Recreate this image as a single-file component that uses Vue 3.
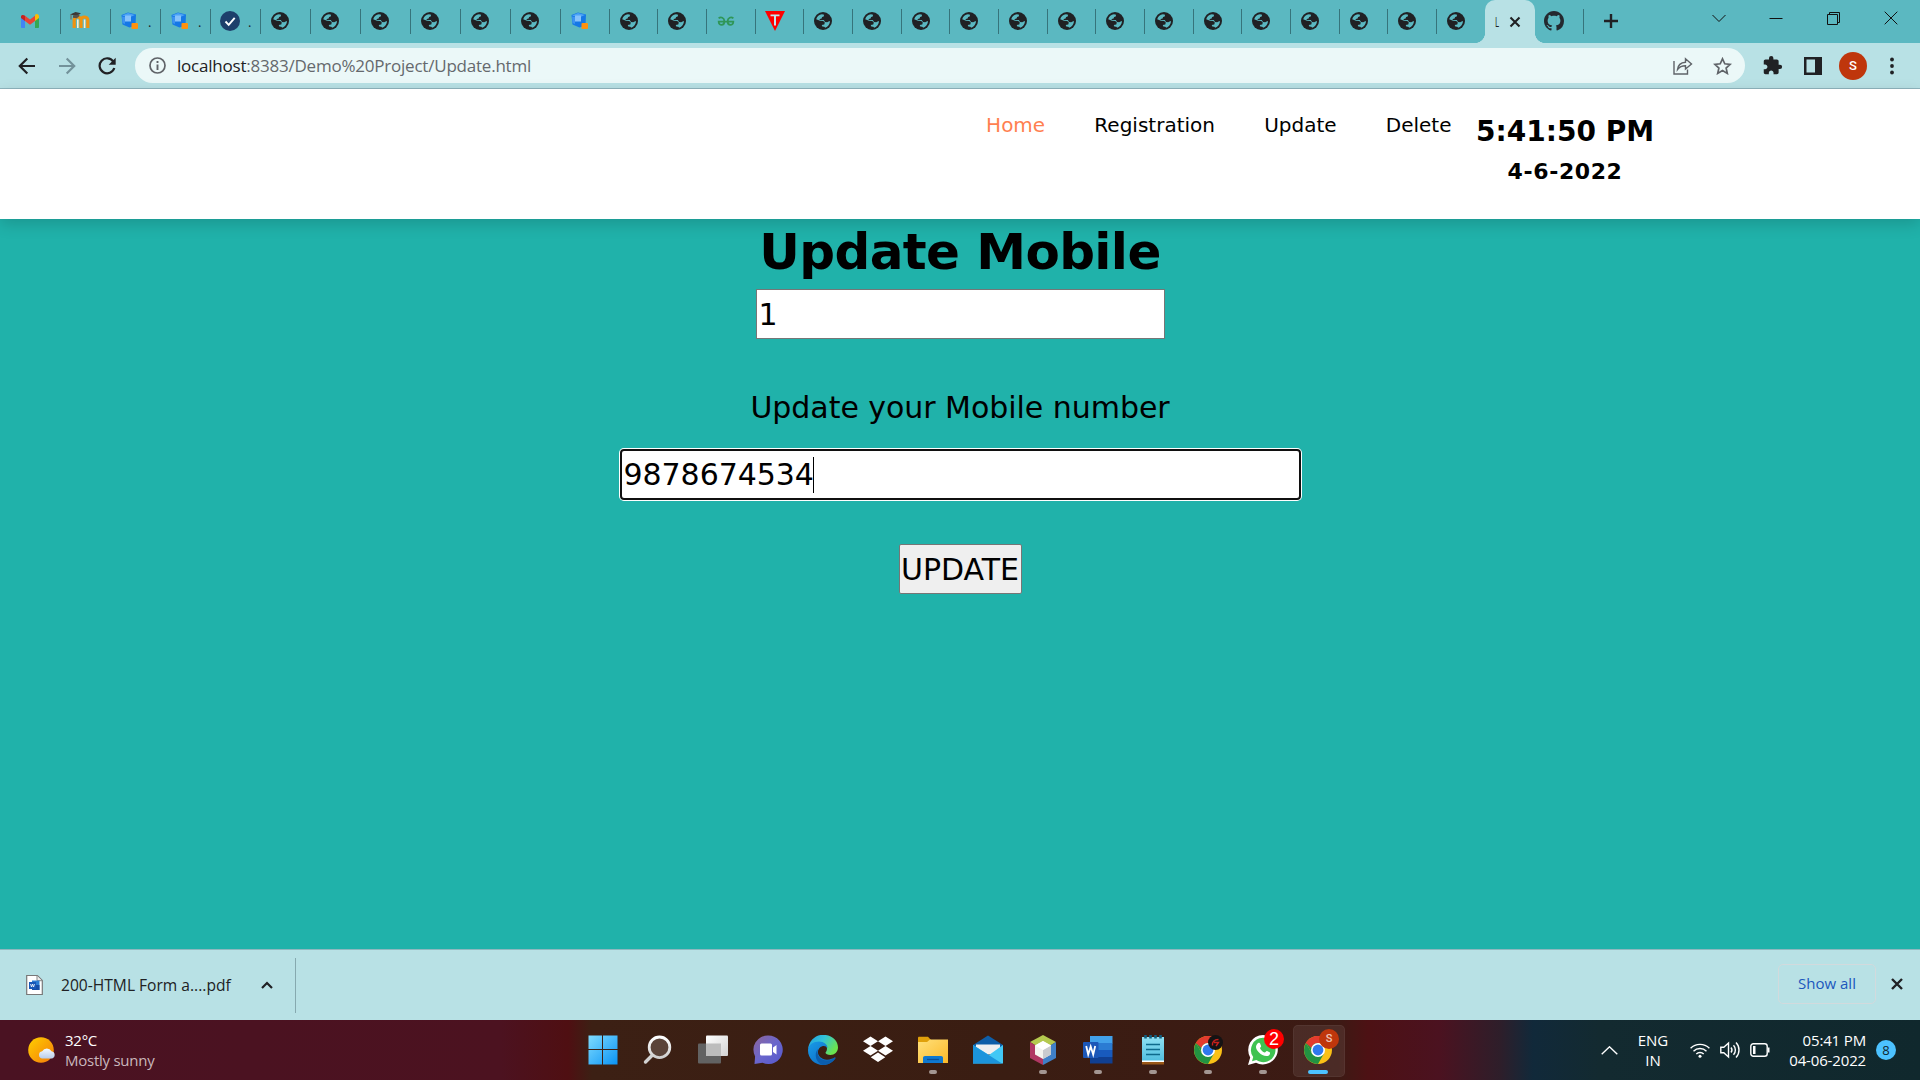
<script setup>
const wide = ['gmail', 'moodle', 'cube', 'cube', 'check', 'globe', 'globe', 'globe', 'globe', 'globe', 'globe']
const narrow = ['cube', 'globe', 'globe', 'gfg', 'tee', ...Array(14).fill('globe')]
const tabs = [
  ...wide.map((icon, i) => ({ icon, narrow: false, dot: i > 1 && i < 5 })),
  ...narrow.map((icon) => ({ icon, narrow: true, dot: false })),
]
const links = ['Home', 'Registration', 'Update', 'Delete']
const apps = [
  { icon: 'start' }, { icon: 'search' }, { icon: 'taskview' }, { icon: 'chat' }, { icon: 'edge' },
  { icon: 'dropbox' }, { icon: 'folder', open: true }, { icon: 'mail' }, { icon: 'netbeans', open: true },
  { icon: 'word', open: true }, { icon: 'notepad', open: true }, { icon: 'chrome', open: true, badge: 'dark' },
  { icon: 'whatsapp', open: true, badge: 'count' }, { icon: 'chrome', active: true, badge: 'user' },
]
</script>

<template>
  <div class="screen">
    <svg class="defs" width="0" height="0" aria-hidden="true">
      <defs>
        <linearGradient id="gStart" x1="0" y1="0" x2="1" y2="1"><stop offset="0" stop-color="#7fdcff" /><stop offset="1" stop-color="#0a93f5" /></linearGradient>
        <linearGradient id="gSearch" x1="0" y1="0" x2="0" y2="1"><stop offset="0" stop-color="#ffffff" /><stop offset="1" stop-color="#cfcfcf" /></linearGradient>
        <linearGradient id="gTask" x1="0" y1="0" x2="1" y2="1"><stop offset="0" stop-color="#ffffff" /><stop offset="1" stop-color="#d2d2d2" /></linearGradient>
        <linearGradient id="gChat" x1="0" y1="0" x2="1" y2="1"><stop offset="0" stop-color="#8e6598" /><stop offset=".5" stop-color="#6a66cc" /><stop offset="1" stop-color="#5558cc" /></linearGradient>
        <linearGradient id="gEdge" x1="0" y1="0" x2="1" y2=".5"><stop offset="0" stop-color="#1e9de4" /><stop offset=".5" stop-color="#33c3d7" /><stop offset="1" stop-color="#6be34f" /></linearGradient>
        <linearGradient id="gEdge2" x1="0" y1="0" x2="1" y2="1"><stop offset="0" stop-color="#199be8" /><stop offset="1" stop-color="#0a62bd" /></linearGradient>
        <linearGradient id="gFolder" x1="0" y1="0" x2="1" y2="1"><stop offset="0" stop-color="#ffe07a" /><stop offset="1" stop-color="#fbb929" /></linearGradient>
        <linearGradient id="gSun" x1="0" y1="0" x2="1" y2="1"><stop offset="0" stop-color="#ffd000" /><stop offset="1" stop-color="#f47a0a" /></linearGradient>
        <linearGradient id="gCloud" x1="0" y1="0" x2="0" y2="1"><stop offset="0" stop-color="#f4faff" /><stop offset="1" stop-color="#b8cdea" /></linearGradient>
        <linearGradient id="gNote" x1="0" y1="0" x2="0" y2="1"><stop offset="0" stop-color="#8fe0f2" /><stop offset="1" stop-color="#52bfdf" /></linearGradient>
      </defs>
      <symbol id="i-globe" viewBox="0 0 18 18">
        <circle cx="9" cy="9" r="9" fill="#202124" />
        <path d="M2.2 7.3C3 4.4 5.2 2.5 7.9 2.2l2.2.5-.4 1.8-1.6.5-.5 1.5-1.8.4-.2 1h4.2l1.2 2.2 2.2.2 2.4-1.2.3.2c0 3.2-2.3 5.8-5.1 6.5l.1-.7-3.100-.8-.2-1.400 2.700-.3.5-2.100-1.600-1.500-3.200-.3z" fill="#5bb8c1" />
        <path d="M2.2 8.600l3.900 2 .2 1.700 1.500.7-.2 2.600C4.500 15.100 2 12.100 2.200 8.600z" fill="#202124" />
      </symbol>
      <symbol id="i-gmail" viewBox="0 0 20 20">
        <path d="M1 5v11c0 .6.5 1 1 1h3V9z" fill="#4285f4" /><path d="M19 5v11c0 .6-.5 1-1 1h-3V9z" fill="#34a853" />
        <path d="M15 4.8V10l4-3V5.300c0-2-2.200-3-3.700-1.800z" fill="#fbbc04" /><path d="M5 4.800 10 8.500l5-3.700V10l-5 3.700L5 10z" fill="#ea4335" /><path d="M1 5.300V7l4 3V4.800l-.4-.3C3 3.300 1 4.300 1 5.300z" fill="#c5221f" />
      </symbol>
      <symbol id="i-moodle" viewBox="0 0 20 20">
        <path d="M4.200 17V7.500M4.200 17V9c0-4 6.800-4 6.800 0v8M11 9c0-4 6.800-4 6.800 0v8" fill="none" stroke="#f0930f" stroke-width="3.200" />
        <path d="M7 17V8.500h1.600V17zm6.800 0V8.500h1.600V17z" fill="#fff0d2" />
        <path d="M0 3.500 5.500 1l5.500 1.200L6.500 5z" fill="#3c3936" /><path d="M3 4.500v2.300l3.800.4 2.500-2V3.500z" fill="#57514a" /><path d="M1 3.500v5" stroke="#77624c" />
      </symbol>
      <symbol id="i-cube" viewBox="0 0 20 20">
        <path d="M1.500 4 8 1.500l8 2-.5 11-6 2-7-3z" fill="#1478e6" /><path d="M2 4.500 8 2l7 2-6 2.500z" fill="#4ba2f5" />
        <path d="M5 4.500h6v6H5z" fill="#85c2fb" /><path d="M2 5.500 5 6v7l-2.500-1z" fill="#3c93f1" /><rect x="11.500" y="12" width="6.500" height="6" rx="1" fill="#ff930f" />
      </symbol>
      <symbol id="i-check" viewBox="0 0 20 20">
        <circle cx="10" cy="10" r="10" fill="#1d3f6b" /><path d="m5.500 10.500 3.200 3.300 6-7" fill="none" stroke="#fff" stroke-width="1.900" />
      </symbol>
      <symbol id="i-gfg" viewBox="0 0 20 20">
        <path d="M2.600 7.300c2.300-1.700 5.800-.8 5.800 3.200 0 4.500-5.700 4.500-5.700.2h14.600c0 4.300-5.700 4.300-5.700-.2 0-4 3.500-4.900 5.800-3.200" fill="none" stroke="#2f9658" stroke-width="1.800" />
      </symbol>
      <symbol id="i-tee" viewBox="0 0 20 20"><path d="M0 0h20L10 20z" fill="#f00" /><path d="M5.500 3.500h9v1.800h-3.500V14.500H9V5.300H5.500z" fill="#bfe9ee" /></symbol>
      <symbol id="i-github" viewBox="0 0 16 16"><path fill="#24292f" d="M8 0C3.580 0 0 3.580 0 8c0 3.540 2.290 6.530 5.470 7.590.4.070.55-.17.55-.38 0-.19-.01-.82-.01-1.490-2.010.37-2.530-.49-2.690-.94-.09-.23-.48-.94-.82-1.130-.28-.15-.68-.52-.01-.53.63-.01 1.080.58 1.230.82.72 1.210 1.870.87 2.330.66.07-.52.28-.87.51-1.070-1.780-.2-3.640-.89-3.640-3.950 0-.87.31-1.590.82-2.150-.08-.2-.36-1.020.08-2.120 0 0 .67-.21 2.200.82.640-.18 1.320-.27 2-.27s1.360.09 2 .27c1.530-1.040 2.200-.82 2.200-.82.44 1.100.16 1.920.08 2.120.51.56.82 1.270.82 2.150 0 3.070-1.870 3.750-3.650 3.950.29.25.54.73.54 1.480 0 1.070-.01 1.930-.01 2.200 0 .21.15.46.55.38A8.010 8.010 0 0 0 16 8c0-4.420-3.580-8-8-8z" /></symbol>

      <symbol id="i-start" viewBox="0 0 30 30"><path d="M.5.500H14V14H.5zM15 .5h14.500V14H15zM.5 15H14v14.500H.5zM15 15h14.500v14.500H15z" fill="url(#gStart)" /></symbol>
      <symbol id="i-search" viewBox="0 0 30 30"><path d="M9.500 20 2.500 27" stroke="#d2d2d2" stroke-width="3.400" stroke-linecap="round" /><circle cx="16.500" cy="12.300" r="10.300" fill="#5a4339" stroke="url(#gSearch)" stroke-width="2.800" /></symbol>
      <symbol id="i-taskview" viewBox="0 0 30 30"><rect x="0" y="8.500" width="23" height="20" rx="1" fill="#626262" /><rect x="8" y=".5" width="22" height="20.500" rx="1" fill="url(#gTask)" /><rect x="8" y="8.500" width="15" height="12.500" fill="#bcbcbc" /></symbol>
      <symbol id="i-chat" viewBox="0 0 30 30"><path d="M15 .5a14.300 14.300 0 1 1-5.500 27.300L1.500 29l.6-7.500A14.300 14.300 0 0 1 15 .5z" fill="url(#gChat)" /><rect x="7" y="8.500" width="12" height="12" rx="1.500" fill="#fff" /><path d="m20 12.500 3.500-2.500v9.500L20 17z" fill="#fff" /></symbol>
      <symbol id="i-edge" viewBox="0 0 30 30">
        <path d="M.1 14C1 5.500 7.500-.2 15-.2c8.500 0 15 5.500 15 12.700 0 4.500-3.500 7.500-7.500 7.500-3 0-5-1.200-5-2.200 0-.8 1.500-1.500 1.500-4C19 10 15.500 8 11 8 6 8 1.500 10.500.1 14z" fill="url(#gEdge)" />
        <path d="M.1 14C.8 9.500 5.500 6.500 11 6.500c5 0 8.500 3 8.500 6.500-1.500-2.500-5-2.800-7.500-.5-4.500 4-1.500 12 7 12.200 3.500 0 6.500-1.500 7.500-2.200.8-.4 1.300.3.800 1C24.500 27.500 20 30 15 30 6 30-.8 22.500.1 14z" fill="url(#gEdge2)" />
        <path d="M10 14c-2 6 2 11.500 9 11.500 4 0 7-2.200 8-3 .6-.1.500.6.200 1C24 28 19.500 30 15 30 8 28 5.500 19 10 14z" fill="#0b5dad" />
      </symbol>
      <symbol id="i-dropbox" viewBox="0 0 30 30"><path d="m7.500 1.500 7.500 4.700-7.500 4.700L0 6.200zm15 0L30 6.200l-7.500 4.700L15 6.200zM7.500 11l7.500 4.700-7.500 4.700L0 15.700zm15 0 7.500 4.700-7.500 4.700-7.500-4.700zM15 17.500l7.300 4.700L15 27l-7.300-4.800z" fill="#fff" /></symbol>
      <symbol id="i-folder" viewBox="0 0 30 30"><path d="M0 3c0-.8.500-1.300 1.300-1.300H10L13 5v5H0z" fill="#e0a00b" /><path d="M0 7h9l3-2.500h18V28H0z" fill="url(#gFolder)" /><path d="M5 28v-5c0-1.200.8-2 2-2h16c1.200 0 2 .8 2 2v5z" fill="#0f78cf" /><path d="M9 24.500h12" stroke="#0b4f97" stroke-width="1.300" /></symbol>
      <symbol id="i-mail" viewBox="0 0 30 30"><path d="M0 10 15 .5 30 10v5H0z" fill="#0e5ea8" /><path d="M3 9.500h24v10H3z" fill="#f0f0f0" /><path d="M0 10l16 10 14-10v18.500H0z" fill="#42c8f5" /><path d="m0 10 29 18.500H0z" fill="#1b94dc" /></symbol>
      <symbol id="i-netbeans" viewBox="0 0 30 30"><path d="m15 0 13 7-13 8L2 7z" fill="#b4c94f" /><path d="M2 7v16l13 7V15z" fill="#b03763" /><path d="M28 7v16l-13 7V15z" fill="#3f80c8" /><path d="m15 6 8 4.500v9L15 24l-8-4.500v-9z" fill="#f4f4f0" /><path d="M15 15v9l8-4.500v-9z" fill="#c9cbcf" /><path d="m7 10.500 8-4.500 8 4.500-8 4.500z" fill="#fff" /></symbol>
      <symbol id="i-word" viewBox="0 0 30 30"><path d="M7 1h22.500v7.500H7z" fill="#42a1ea" /><path d="M7 8h22.500v7H7z" fill="#2b7cd3" /><path d="M7 15h22.500v7H7z" fill="#185abd" /><path d="M7 22h22.500v6.500H7z" fill="#103f91" /><rect x="0" y="7" width="15.500" height="16" rx="1" fill="#1c57b8" /><path d="m3.200 11 2 8.500 2.500-8 2.500 8 2-8.500" fill="none" stroke="#fff" stroke-width="1.800" /></symbol>
      <symbol id="i-notepad" viewBox="0 0 30 30"><path d="M4 26h22v3.500H4z" fill="#9a5717" /><path d="M4 24h22v3H4z" fill="#fff" /><path d="M4 2h22v23.500H4z" fill="url(#gNote)" /><path d="M7.500 0v3.500m5-3.500v3.500m5-3.500v3.500m5-3.500v3.500" stroke="#115f80" stroke-width="2.600" /><path d="M8 9.500h14M8 14.500h14M8 19.500h14" stroke="#0e6a8b" stroke-width="1.700" /></symbol>
      <symbol id="i-chrome" viewBox="0 0 30 30"><circle cx="15" cy="15" r="14" fill="#fbc116" /><path d="M15 15 2.900 8A14 14 0 0 1 27.100 8H15z" fill="#e33b2e" /><path d="M2.900 8A14 14 0 0 0 15 29l6-10.500L9 18.500z" fill="#229342" /><path d="M2.900 8 9 18.500l6-3.500V8z" fill="#229342" /><path d="M2.900 8A14 14 0 0 1 27.100 8H15a7 7 0 0 0-6.500 5z" fill="#e33b2e" /><circle cx="15" cy="15" r="7" fill="#fff" /><circle cx="15" cy="15" r="5.400" fill="#2f79ee" /></symbol>
      <symbol id="i-whatsapp" viewBox="0 0 30 30"><path d="M15 0a15 14.700 0 1 1-7 27.800L0 30l2.200-7.500A15 15 0 0 1 15 0z" fill="#fff" /><path d="M15 2.800A12.200 12.200 0 1 1 8.300 25L4 26.200 5.200 22A12.200 12.200 0 0 1 15 2.800z" fill="#3fc351" /><path d="M10.300 8c.7-.3 1.500-.2 1.800.6l1 2.400c.3 1-1.300 1.600-1 2.400 1 2 2.600 3.300 4.600 4.100.8.200 1.400-1.800 2.300-1.500l2.600 1.300c1 .5.3 2.500-.7 3.200C15 23 7.500 15.500 8 11.500c.2-1.500 1.200-3 2.300-3.500z" fill="#fff" /></symbol>
    </svg>

    <header class="tabstrip">
      <div v-for="(t, i) in tabs" :key="i" class="tab" :class="{ narrow: t.narrow, first: i === 0 }">
        <svg class="fav" :class="t.icon"><use :href="'#i-' + t.icon" /></svg>
        <span v-if="t.dot" class="dot">.</span>
      </div>
      <div class="tab-active">
        <span class="clip">L</span>
        <svg width="12" height="12" viewBox="0 0 12 12"><path d="m1.500 1.500 9 9m0-9-9 9" stroke="#202124" stroke-width="2.100" /></svg>
      </div>
      <div class="tab-last"><svg class="fav"><use href="#i-github" /></svg></div>
      <svg class="plus" width="16" height="16" viewBox="0 0 16 16"><path d="M8 1v14M1 8h14" stroke="#202124" stroke-width="2.400" /></svg>
      <div class="winctl">
        <svg viewBox="0 0 14 14"><path d="m.5 4 6.500 6.500L13.500 4" /></svg>
        <svg viewBox="0 0 14 14"><path d="M.5 7.500h13" /></svg>
        <svg viewBox="0 0 14 14"><path d="M.5 3.500h10v10H.5zM2.500 3.500v-2h10v10h-2" /></svg>
        <svg viewBox="0 0 14 14"><path d="m.7.700 12.600 12.600m0-12.600L.7 13.300" /></svg>
      </div>
    </header>

    <div class="toolbar">
      <div class="navbtns">
        <svg width="18" height="18" viewBox="0 0 18 18"><path d="M17 9H2.500M9.300 1.500 1.800 9l7.500 7.500" stroke="#202124" /></svg>
        <svg width="18" height="18" viewBox="0 0 18 18"><path d="M1 9h14.500M8.700 1.500 16.200 9l-7.500 7.500" stroke="#73929a" /></svg>
        <svg width="18" height="18" viewBox="0 0 18 18"><path d="M15.300 4.500A7.500 7.500 0 1 0 16.300 11" stroke="#202124" /><path d="M17.700.8v7h-7z" fill="#202124" /></svg>
      </div>
      <div class="omnibox">
        <svg class="info" width="17" height="17" viewBox="0 0 17 17"><circle cx="8.500" cy="8.500" r="7.500" fill="none" stroke="#5f6368" stroke-width="1.700" /><path d="M8.500 7.500V13M8.500 4v2" stroke="#5f6368" stroke-width="1.900" /></svg>
        <span class="url"><b>localhost</b>:8383/Demo%20Project/Update.html</span>
        <svg class="share" width="20" height="18" viewBox="0 0 20 18"><path d="M1 4v13h13.500v-4.500M4.500 12.500c.5-5 3.500-7 8-7.300V1.800l6 5.200-6 5V8.800c-3.500 0-6 1-8 3.700z" fill="none" stroke="#5f6368" stroke-width="1.400" /></svg>
        <svg class="star" width="19" height="18" viewBox="0 0 19 18"><path d="m9.500 1.800 2.300 5 5.300.6-4 3.600 1.200 5.400-4.800-2.800-4.800 2.800L5.900 11l-4-3.600 5.300-.6z" fill="none" stroke="#5f6368" stroke-width="1.700" /></svg>
      </div>
      <div class="tools">
        <svg viewBox="0 0 24 24" width="21" height="21"><path fill="#202124" d="M20.500 11H19V7c0-1.100-.9-2-2-2h-4V3.500a2.500 2.500 0 0 0-5 0V5H4c-1.100 0-1.990.9-1.990 2v3.800H3.500c1.490 0 2.700 1.210 2.700 2.700s-1.210 2.700-2.700 2.700H2V20c0 1.100.9 2 2 2h3.800v-1.500c0-1.490 1.210-2.700 2.700-2.700s2.700 1.210 2.700 2.700V22H17c1.100 0 2-.9 2-2v-4h1.500a2.500 2.500 0 0 0 0-5z" /></svg>
        <svg viewBox="0 0 18 18" width="18" height="18"><path d="M0 0h18v18H0zM2.500 2.500v13H11v-13z" fill="#202124" fill-rule="evenodd" /></svg>
        <span class="avatar">S</span>
        <svg viewBox="0 0 4 18" width="4" height="18"><g fill="#202124"><circle cx="2" cy="2.500" r="1.900" /><circle cx="2" cy="9" r="1.900" /><circle cx="2" cy="15.500" r="1.900" /></g></svg>
      </div>
    </div>

    <main class="page">
      <nav class="site">
        <ul><li v-for="(l, i) in links" :key="l" :class="{ on: i === 0 }">{{ l }}</li></ul>
        <div class="clock"><div class="time">5:41:50 PM</div><div class="date">4-6-2022</div></div>
      </nav>
      <section class="form">
        <h1>Update Mobile</h1>
        <div class="field id">1</div>
        <p>Update your Mobile number</p>
        <div class="field mobile">9878674534<i class="caret"></i></div>
        <button type="button">UPDATE</button>
      </section>
    </main>

    <div class="downloads">
      <div class="item">
        <svg width="17" height="20" viewBox="0 0 17 20"><path d="M.7.500h10.600l5 5v14H.7z" fill="#fff" stroke="#777" stroke-width="1.200" /><path d="M11 .7v5h5" fill="#eee" stroke="#888" /><path d="M6 5.500h7.500v9.500H6z" fill="#2b7cd3" /><path d="M6 10h7.500v5H6z" fill="#174ea6" /><rect x="3" y="7" width="7" height="7" fill="#1858b8" /><path d="m4.500 9 1 3 1-3 1 3 1-3" fill="none" stroke="#fff" stroke-width=".8" /></svg>
        <span class="fname">200-HTML Form a....pdf</span>
        <svg class="up" width="12" height="8" viewBox="0 0 12 8"><path d="m1 7 5-5 5 5" fill="none" stroke="#202124" stroke-width="2.200" /></svg>
      </div>
      <div class="showall"><span>Show all</span></div>
      <svg class="x" width="12" height="12" viewBox="0 0 12 12"><path d="m1 1 10 10M11 1 1 11" stroke="#202124" stroke-width="2.400" /></svg>
    </div>

    <footer class="taskbar">
      <div class="weather">
        <svg width="28" height="27" viewBox="0 0 28 27"><circle cx="13" cy="13" r="12.800" fill="url(#gSun)" /><path d="M14 21.500a3.700 3.700 0 0 1 .2-7.300 5.300 5.300 0 0 1 9.300 0 3.800 3.800 0 0 1 .7 7.300z" fill="url(#gCloud)" /></svg>
        <div class="wtext"><span>32°C</span><span class="dim">Mostly sunny</span></div>
      </div>
      <div class="apps">
        <div v-for="(a, i) in apps" :key="i" class="app" :class="{ open: a.open, active: a.active }">
          <svg width="30" height="30"><use :href="'#i-' + a.icon" /></svg>
          <span v-if="a.badge" class="badge" :class="a.badge">
            <template v-if="a.badge === 'count'">2</template>
            <template v-else-if="a.badge === 'user'">S</template>
            <svg v-else width="9" height="9" viewBox="0 0 9 9"><path d="M1.500 7.500C1 4 3 1.500 7.500 1.500M3 4.500h4.500L5 8" fill="none" stroke="#c8201c" stroke-width="1.400" /></svg>
          </span>
        </div>
      </div>
      <div class="tray">
        <svg class="tchev" width="17" height="9" viewBox="0 0 17 9"><path d="m.7 8.300 7.800-7.500 7.800 7.500" /></svg>
        <div class="lang"><span>ENG</span><span>IN</span></div>
        <svg class="wifi" width="20" height="15" viewBox="0 0 20 15"><path d="M.6 5.300a13.300 13.300 0 0 1 18.800 0M3.500 8.200a9.200 9.200 0 0 1 13 0M6.300 11a5.200 5.200 0 0 1 7.400 0" /><circle cx="10" cy="13.200" r="1.500" fill="#fff" stroke="none" /></svg>
        <svg class="vol" width="20" height="18" viewBox="0 0 20 18"><path d="M.8 6.300h3L8.500 2v14l-4.700-4.300h-3zM11 6.500c1.200 1.500 1.200 3.500 0 5M13.500 4.200c2.500 2.700 2.500 6.900 0 9.600M16 1.500c4 4 4 11 0 15" /></svg>
        <svg class="bat" width="20" height="14" viewBox="0 0 20 14"><rect x=".8" y=".8" width="16.400" height="12.400" rx="2.500" /><path d="M18 4.500h1.500v5H18z" fill="#fff" stroke="none" /><path d="M3 3h2.500v8H3z" fill="#fff" stroke="none" /></svg>
        <div class="when"><span>05:41 PM</span><span>04-06-2022</span></div>
        <span class="notif">8</span>
      </div>
    </footer>
  </div>
</template>

<style>
body { margin: 0; overflow: hidden; }
</style>

<style scoped>
.screen { width: 1920px; height: 1080px; display: flex; flex-direction: column; overflow: hidden; font-family: "Open Sans", "Noto Sans", sans-serif; color: #202124; }
.screen * { box-sizing: border-box; }
.screen svg { flex: none; display: block; }
.defs { position: absolute; }

.tabstrip { height: 43px; flex: none; background: #5bb8c1; display: flex; padding-left: 10px; }
.tab { width: 50px; flex: none; position: relative; display: flex; align-items: center; padding-left: 10px; }
.tab.narrow { width: 48.68px; }
.tab::before, .tab-last::after { content: ""; position: absolute; left: 0; top: 9px; width: 1px; height: 25px; background: #36747b; }
.tab.first::before { display: none; }
.tab-last::after { left: 48px; }
.fav { width: 20px; height: 20px; position: relative; top: -.5px; }
.fav.globe { width: 18px; height: 18px; margin-left: 1px; }
.dot { font-size: 13px; line-height: 18px; margin-left: 8px; color: #202124; }
.tab-active { width: 50px; flex: none; position: relative; background: #b8e1e5; border-radius: 10px 10px 0 0; display: flex; align-items: center; padding-left: 10px; }
.tab-active::before, .tab-active::after { content: ""; position: absolute; bottom: 0; width: 10px; height: 10px; }
.tab-active::before { left: -10px; background: radial-gradient(circle at 0 0, transparent 9.700px, #b8e1e5 10.200px); }
.tab-active::after { right: -10px; background: radial-gradient(circle at 100% 0, transparent 9.700px, #b8e1e5 10.200px); }
.clip { font-size: 14px; line-height: 20px; width: 8px; margin-right: 6px; transform: scaleX(.55); transform-origin: 0 50%; }
.tab-last { width: 60px; flex: none; position: relative; display: flex; align-items: center; padding-left: 9px; }
.plus { margin: 13px 0 0 8px; }
.winctl { display: flex; margin: 11px 22px 0 auto; gap: 43.300px; }
.winctl svg { width: 14px; height: 14px; fill: none; stroke: #111; stroke-width: 1; }

.toolbar { height: 46px; flex: none; background: #b8e1e5; border-bottom: 1px solid #8fb5be; display: flex; align-items: center; }
.navbtns { display: flex; gap: 22px; padding-left: 18px; width: 135px; fill: none; stroke-width: 2.200; }
.omnibox { width: 1610px; height: 35px; border-radius: 18px; background: #ebf8f8; display: flex; align-items: center; padding-left: 14px; }
.url { margin-left: 11px; font-size: 17px; line-height: 24px; color: #65696d; letter-spacing: -.22px; white-space: nowrap; }
.url b { font-weight: 400; color: #202124; }
.share { margin-left: auto; }
.star { margin: 0 13px 0 20px; }
.tools { display: flex; align-items: center; margin-left: 17px; }
.tools svg:nth-child(2) { margin-left: 21px; }
.avatar { width: 28px; height: 28px; border-radius: 50%; background: #bf360c; color: #fff; font: 500 13px/28px Roboto, sans-serif; text-align: center; margin: 0 23px 0 17px; }

.page { flex: 1; background: #20b2aa; font-family: Verdana, "DejaVu Sans", sans-serif; color: #000; display: flex; flex-direction: column; }
.site { height: 130px; flex: none; background: #fff; box-shadow: 0 5px 15px rgba(0, 0, 0, .16); display: flex; padding-left: 961.500px; }
.site ul { list-style: none; margin: 24px 0 0; padding: 0; display: flex; font-size: 20px; line-height: 24px; }
.site li { padding: 0 24.600px; }
.site li.on { color: #ff7f50; }
.clock { text-align: center; font-weight: 700; width: 178px; }
.time { font-size: 28px; line-height: 34px; margin-top: 26px; white-space: nowrap; }
.date { font-size: 22px; line-height: 28px; margin-top: 9px; letter-spacing: .6px; }
.form { display: flex; flex-direction: column; align-items: center; font-size: 30px; }
h1 { margin: 3px 0 0; font-size: 50px; line-height: 60px; letter-spacing: -.6px; }
.field { height: 50px; background: #fff; border: 1px solid #767676; line-height: 50px; padding-left: 2px; }
.field.id { width: 409px; margin-top: 7px; }
.form p { margin: 51px 0 0; line-height: 36px; letter-spacing: -.04px; }
.field.mobile { width: 677px; height: 47px; margin-top: 25px; line-height: 47px; border: 0; border-radius: 2px; padding-left: 2px; outline: 2px solid #101010; box-shadow: 0 0 0 3px #fff; display: flex; align-items: center; letter-spacing: -.05px; }
.caret { width: 1px; height: 36px; background: #000; margin-left: -1px; }
.form button { margin-top: 46px; width: 123px; height: 50px; padding: 2px 0 0; background: #efefef; border: 1px solid #767676; border-radius: 2px; font: 30px/46px Verdana, "DejaVu Sans", sans-serif; color: #000; white-space: nowrap; }

.downloads { height: 71px; flex: none; background: #b8e1e5; border-top: 1px solid #8fb8bf; display: flex; align-items: center; }
.item { width: 296px; height: 55px; border-right: 1px solid #86a9af; display: flex; align-items: center; padding-left: 26px; margin-top: 1px; }
.item > * { position: relative; top: -1px; }
.fname { margin-left: 18px; width: 183px; font-size: 15.600px; white-space: nowrap; }
.up { margin-left: 17px; }
.showall { margin-left: auto; width: 98px; height: 40px; border: 1px solid #d2dadd; border-radius: 5px; color: #1b57bd; font-size: 15px; line-height: 36px; text-align: center; margin-bottom: 2px; }
.x { margin: 0 17px 2px 15px; }

.taskbar { height: 60px; flex: none; color: #fff; font-size: 15px; line-height: 20px; display: flex; position: relative; background: linear-gradient(90deg, #4a1222 0, #4c1220 500px, #4f0f12 568px, #3c2014 592px, #3a1d12 1000px, #3c1a14 1338px, #4d1114 1368px, #4b1220 1440px, #2e1e2a 1500px, #11293a 1533px, #132a30 1600px, #10282d 1920px); }
.weather { width: 575px; display: flex; align-items: center; padding-left: 28px; }
.wtext { margin-left: 9px; display: flex; flex-direction: column; letter-spacing: -.25px; }
.dim { color: #c9b7bc; }
.apps { display: flex; }
.app { width: 55px; height: 60px; position: relative; display: flex; align-items: center; justify-content: center; }
.app > svg { position: relative; z-index: 1; }
.app.open::after, .app.active::after { content: ""; position: absolute; left: 24px; bottom: 6px; width: 8px; height: 4px; border-radius: 2px; background: #a39692; }
.app.active::after { left: 18px; width: 20px; background: #4cc2ff; }
.app.active::before { content: ""; position: absolute; left: 3px; top: 5px; width: 50px; height: 50px; border-radius: 5px; background: rgba(255, 255, 255, .08); border: 1px solid rgba(255, 255, 255, .05); }
.badge { position: absolute; z-index: 2; border-radius: 50%; display: flex; align-items: center; justify-content: center; }
.badge.dark { width: 15px; height: 15px; left: 28px; top: 15px; background: #151314; }
.badge.count { width: 20px; height: 20px; left: 29px; top: 9px; background: #f00; font: 18px/20px "Liberation Sans", sans-serif; }
.badge.user { width: 20px; height: 20px; left: 29px; top: 9px; background: #bf360c; font: 500 11px/20px Roboto, sans-serif; color: #efc5b8; }
.tray { margin-left: auto; display: flex; align-items: center; }
.tray svg { fill: none; stroke: #fff; stroke-width: 1.400; }
.lang { width: 36px; margin: 0 19px 0 17px; display: flex; flex-direction: column; text-align: center; }
.vol { margin: 0 10px; }
.when { width: 96px; display: flex; flex-direction: column; text-align: right; white-space: nowrap; letter-spacing: -.15px; position: relative; top: -.5px; }
.notif { margin: 0 24px 0 10px; width: 20px; height: 20px; border-radius: 50%; background: #4cc2ff; color: #10262c; font-size: 13px; text-align: center; }
</style>
